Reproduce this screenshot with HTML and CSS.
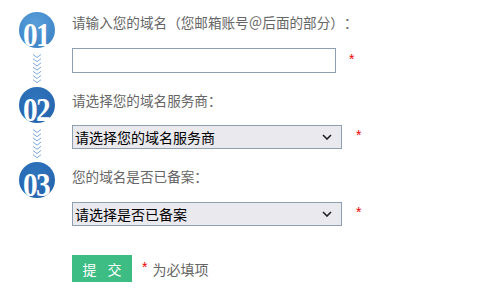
FILE: index.html
```html
<!DOCTYPE html>
<html lang="zh-CN">
<head>
<meta charset="utf-8">
<title>域名设置</title>
<link rel="stylesheet" href="styles.css">
</head>
<body>
<div class="page">
  <div class="steps">
    <div class="circle c1"><span class="num">01</span></div>
    <div class="arrows">
      <svg width="10" height="30" viewBox="0 0 10 30"><g fill="none" stroke="#7ea9dc" stroke-width="1"><polyline points="1,1.5 5,4.5 9,1.5"/><polyline points="1,5.7 5,8.7 9,5.7"/><polyline points="1,9.9 5,12.9 9,9.9"/><polyline points="1,14.1 5,17.1 9,14.1"/><polyline points="1,18.3 5,21.3 9,18.3"/><polyline points="1,22.5 5,25.5 9,22.5"/><polyline points="1,26.7 5,29.7 9,26.7"/></g></svg>
    </div>
    <div class="circle c2"><span class="num">02</span></div>
    <div class="arrows">
      <svg width="10" height="30" viewBox="0 0 10 30"><g fill="none" stroke="#7ea9dc" stroke-width="1"><polyline points="1,1.5 5,4.5 9,1.5"/><polyline points="1,5.7 5,8.7 9,5.7"/><polyline points="1,9.9 5,12.9 9,9.9"/><polyline points="1,14.1 5,17.1 9,14.1"/><polyline points="1,18.3 5,21.3 9,18.3"/><polyline points="1,22.5 5,25.5 9,22.5"/><polyline points="1,26.7 5,29.7 9,26.7"/></g></svg>
    </div>
    <div class="circle c3"><span class="num">03</span></div>
  </div>
  <form class="form">
    <div class="label l1">请输入您的域名<span class="fw open">（</span>您邮箱账号<span class="fw mid">＠</span>后面的部分<span class="fw close">）</span><span class="fw mid">：</span></div>
    <div class="row r1">
      <input class="text" type="text">
      <span class="star">*</span>
    </div>
    <div class="label l2">请选择您的域名服务商<span class="fw mid">：</span></div>
    <div class="row r2">
      <div class="selwrap">
        <select class="sel"><option>请选择您的域名服务商</option></select>
        <svg class="caret" width="10" height="6" viewBox="0 0 10 6"><polyline points="1,1 5,5 9,1" fill="none" stroke="#222" stroke-width="1.6"/></svg>
      </div>
      <span class="star">*</span>
    </div>
    <div class="label l3">您的域名是否已备案<span class="fw mid">：</span></div>
    <div class="row r3">
      <div class="selwrap">
        <select class="sel"><option>请选择是否已备案</option></select>
        <svg class="caret" width="10" height="6" viewBox="0 0 10 6"><polyline points="1,1 5,5 9,1" fill="none" stroke="#222" stroke-width="1.6"/></svg>
      </div>
      <span class="star">*</span>
    </div>
    <div class="row r4">
      <button class="submit" type="button">提 交</button>
      <span class="star small">*</span>
      <span class="req">为必填项</span>
    </div>
  </form>
</div>
</body>
</html>
```
FILE: styles.css
```css
html, body {
  margin: 0;
  padding: 0;
  background: #fff;
}
body {
  font-family: "Noto Sans CJK SC", "Liberation Sans", sans-serif;
  width: 482px;
  height: 292px;
  overflow: hidden;
}
.page {
  display: grid;
  grid-template-columns: 72px auto;
}
.steps {
  display: flex;
  flex-direction: column;
  align-items: center;
  padding-top: 12px;
  padding-left: 1px;
}
.circle {
  width: 36px;
  height: 36px;
  border-radius: 50%;
  display: flex;
  align-items: flex-end;
  justify-content: center;
}
.c1 { background: radial-gradient(circle at 45% 30%, #5a9dda 0%, #4087c9 70%); }
.c2, .c3 { background: radial-gradient(circle at 45% 30%, #2f74bc 0%, #2667b0 70%); }
.num {
  display: block;
  font-family: "Liberation Serif", serif;
  font-weight: bold;
  font-size: 34px;
  line-height: 33px;
  color: #fff;
  letter-spacing: -2px;
  transform: scaleX(0.86);
  margin-bottom: -3px;
  margin-right: 2px;
}
.arrows {
  height: 39px;
  display: flex;
  align-items: center;
  justify-content: center;
}
.arrows svg { display: block; }
.form {
  margin: 0;
  padding-top: 12px;
  display: flex;
  flex-direction: column;
}
.label {
  font-size: 13.6px;
  line-height: 20px;
  color: #666;
  white-space: nowrap;
}
.fw {
  display: inline-block;
  width: 1em;
}
.fw.open { text-align: right; }
.fw.close { text-align: left; }
.fw.mid { text-align: center; }
.l2, .l3 { margin-top: 17px; }
.row {
  display: flex;
  align-items: center;
}
.r1 { margin-top: 16px; }
.r2 { margin-top: 15px; }
.r3 { margin-top: 16px; }
.r4 { margin-top: 29px; }
.text {
  box-sizing: border-box;
  width: 264px;
  height: 25px;
  border: 1px solid #8d9fb0;
  background: #fff;
  margin: 0;
  padding: 0 4px;
  outline: none;
}
.selwrap {
  position: relative;
  display: flex;
}
.sel {
  appearance: none;
  -webkit-appearance: none;
  box-sizing: border-box;
  width: 270px;
  height: 24px;
  border: 1px solid #8d9fb0;
  border-radius: 0;
  background: #e9e9ee;
  margin: 0;
  padding: 0 20px 0 2px;
  font-family: "Noto Sans CJK SC", "Liberation Sans", sans-serif;
  font-size: 14px;
  color: #000;
}
.caret {
  position: absolute;
  right: 10px;
  top: 9px;
  pointer-events: none;
}
.star {
  color: #e00;
  font-family: "Liberation Sans", sans-serif;
  font-size: 14px;
  margin-left: 14px;
  align-self: center;
  position: relative;
  top: -2px;
}
.r1 .star { margin-left: 13px; }
.submit {
  width: 60px;
  height: 27px;
  border: none;
  background: #3dbd83;
  color: #fff;
  font-family: "Noto Sans CJK SC", "Liberation Sans", sans-serif;
  font-size: 14px;
  letter-spacing: 4px;
  padding: 0 0 0 4px;
  margin: 0;
}
.star.small { margin-left: 10px; }
.req {
  margin-left: 5px;
  font-size: 14px;
  color: #666;
}
```
